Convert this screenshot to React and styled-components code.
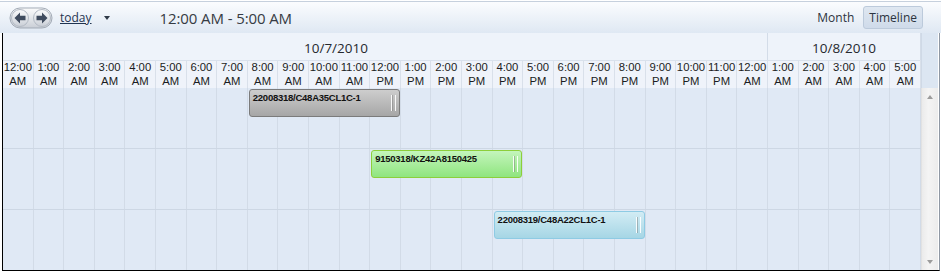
import React from "react";
import styled, { createGlobalStyle } from "styled-components";

const GlobalStyle = createGlobalStyle`
  html, body {
    margin: 0;
    padding: 0;
    background: #ffffff;
  }
  body {
    font-family: "Open Sans", "Noto Sans", sans-serif;
  }
`

const Frame = styled.div`
  width: 941px;
  height: 273px;
  overflow: hidden;
  background: #ffffff;
`

const Toolbar = styled.div`
  height: 32px;
  box-sizing: border-box;
  border-top: 1px solid #c6d0dd;
  margin-top: 1px;
  background: linear-gradient(#fbfcfe 0%, #eef3f9 45%, #dfe8f3 100%);
  display: flex;
  align-items: center;
  padding: 0 18px 0 9px;
`

const NavPair = styled.svg`
  width: 44px;
  height: 22px;
  display: block;
  margin-top: 1px;
`

const TodayLink = styled.a`
  margin-left: 7px;
  font-size: 12px;
  color: #1f3350;
  text-decoration: underline;
  cursor: pointer;
`

const Caret = styled.span`
  margin-left: 12px;
  width: 0;
  height: 0;
  border-left: 3.5px solid transparent;
  border-right: 3.5px solid transparent;
  border-top: 4px solid #2f3a48;
`

const RangeTitle = styled.div`
  margin-left: 50px;
  font-size: 15px;
  color: #363b43;
  letter-spacing: -0.1px;
`

const ViewSwitch = styled.div`
  margin-left: auto;
  display: flex;
  align-items: center;
  gap: 3px;
`

const ViewButton = styled.div`
  height: 23px;
  box-sizing: border-box;
  padding: 0 5px;
  display: flex;
  align-items: center;
  font-size: 12px;
  color: #2c3440;
  border-radius: 3px;
  border: 1px solid ${p => (p.$active ? "#bccadb" : "transparent")};
  background: ${p => (p.$active ? "linear-gradient(#dfe7f1, #cfdbea)" : "transparent")};
`

const Body = styled.div`
  margin-left: 2px;
  width: 936px;
  display: grid;
  grid-template-columns: 918px 17px;
  grid-template-rows: 27px 28px 182px;
  border-left: 1px solid #000000;
  border-right: 1px solid #8f98a4;
  border-bottom: 1px solid #000000;
`

const DateRow = styled.div`
  display: grid;
  grid-template-columns: repeat(30, 1fr);
  background: #eef3fa;
  border-bottom: 1px solid #d9e1ec;
  box-sizing: border-box;
  height: 28px;
`

const DateCell = styled.div`
  grid-column: span ${p => p.$span};
  border-right: 1px solid #d3dce8;
  font-size: 13.5px;
  color: #26292e;
  display: flex;
  align-items: center;
  justify-content: ${p => (p.$offset ? "flex-start" : "center")};
  padding-left: ${p => p.$offset || 0}px;
  padding-top: 2px;
`

const HeaderFill = styled.div`
  grid-row: 1 / span 2;
  grid-column: 2;
  background: #dce6f2;
  border-left: 1px solid #cfd9e6;
`

const TimeRow = styled.div`
  grid-column: 1;
  display: grid;
  grid-template-columns: repeat(30, 1fr);
  background: #eff3fa;
  border-bottom: 1px solid #d3dce8;
  margin-top: 1px;
  height: 27px;
`

const TimeCell = styled.div`
  border-right: 1px solid #d9e0ea;
  display: flex;
  flex-direction: column;
  align-items: center;
  overflow: hidden;
`

const TimeLine = styled.span`
  display: block;
  height: 13.5px;
  font-family: "Liberation Sans", Arial, sans-serif;
  font-size: 11.3px;
  line-height: 13.5px;
  color: #1b1d22;
  white-space: nowrap;
`

const Content = styled.div`
  grid-column: 1;
  display: flex;
  flex-direction: column;
  background: #e0e9f5;
`

const Lane = styled.div`
  height: 60px;
  display: grid;
  grid-template-columns: repeat(30, 1fr);
  border-bottom: ${p => (p.$last ? "none" : "1px solid #cdd7e4")};
`

const GridCell = styled.div`
  grid-row: 1;
  border-right: 1px solid #d2dbe7;
`

const palette = {
  gray: { top: "#cdcdcd", bottom: "#a6a6a6", border: "#7b7b7b" },
  green: { top: "#c4f5bc", bottom: "#8fe57f", border: "#8ccf3a" },
  blue: { top: "#d2ecf4", bottom: "#a6d6e5", border: "#8ecbe4" },
}

const Appointment = styled.div`
  grid-row: 1;
  grid-column: ${p => p.$start + 1} / span ${p => p.$length};
  align-self: start;
  margin: 1px 1px 0 1px;
  height: 28px;
  box-sizing: border-box;
  border-radius: 3px;
  border: 1px solid ${p => palette[p.$tone].border};
  background: linear-gradient(${p => palette[p.$tone].top}, ${p => palette[p.$tone].bottom});
  position: relative;
  z-index: 1;
  padding: 2px 0 0 3px;
  font-family: "Liberation Sans", Arial, sans-serif;
  font-weight: bold;
  font-size: 9.5px;
  letter-spacing: -0.25px;
  color: #111111;
  white-space: nowrap;
`

const Grip = styled.span`
  position: absolute;
  right: 3px;
  top: 5px;
  width: 3px;
  height: 16px;
  border-left: 1px solid rgba(255, 255, 255, 0.9);
  border-right: 1px solid rgba(255, 255, 255, 0.9);
  box-shadow: inset 1px 0 0 rgba(120, 120, 120, 0.45);
`

const ScrollBar = styled.div`
  grid-column: 2;
  background: linear-gradient(90deg, #ebebeb, #f4f4f4 40%, #ececec);
  border-left: 1px solid #e2e2e2;
  display: flex;
  flex-direction: column;
  justify-content: space-between;
  align-items: center;
  padding: 7px 0 6px;
`

const ScrollArrow = styled.span`
  width: 0;
  height: 0;
  border-left: 3.5px solid transparent;
  border-right: 3.5px solid transparent;
  ${p =>
    p.$down
      ? "border-top: 4px solid #9c9c9c;"
      : "border-bottom: 4px solid #9c9c9c;"}
`

const hours = [];
for (let i = 0; i < 30; i++) {
  const h = i % 24;
  const label = (h % 12 === 0 ? 12 : h % 12) + ":00";
  hours.push({ label, ampm: h < 12 ? "AM" : "PM" });
}

const lanes = [
  { id: "22008318/C48A35CL1C-1", start: 8, length: 5, tone: "gray" },
  { id: "9150318/KZ42A8150425", start: 12, length: 5, tone: "green" },
  { id: "22008319/C48A22CL1C-1", start: 16, length: 5, tone: "blue" },
]

const NavButtons = () => (
  <NavPair viewBox="0 0 44 22">
    <defs>
      <linearGradient id="navg" x1="0" y1="0" x2="0" y2="1">
        <stop offset="0" stopColor="#fbfbfc" />
        <stop offset="0.5" stopColor="#e3e6ea" />
        <stop offset="1" stopColor="#c9ced6" />
      </linearGradient>
    </defs>
    <path
      d="M11 1 A10 10 0 0 0 11 21 L33 21 A10 10 0 0 0 33 1 Z"
      fill="url(#navg)"
      stroke="#a3abb6"
    />
    <circle cx="11" cy="11" r="8.5" fill="url(#navg)" stroke="#b3bac4" />
    <circle cx="33" cy="11" r="8.5" fill="url(#navg)" stroke="#b3bac4" />
    <path d="M5.5 11 L11 5.5 L11 8.8 L16.5 8.8 L16.5 13.2 L11 13.2 L11 16.5 Z" fill="#3f4b5e" />
    <path d="M38.5 11 L33 5.5 L33 8.8 L27.5 8.8 L27.5 13.2 L33 13.2 L33 16.5 Z" fill="#3f4b5e" />
  </NavPair>
)

export default function App() {
  return (
    <Frame>
      <GlobalStyle />
      <Toolbar>
        <NavButtons />
        <TodayLink>today</TodayLink>
        <Caret />
        <RangeTitle>12:00 AM - 5:00 AM</RangeTitle>
        <ViewSwitch>
          <ViewButton>Month</ViewButton>
          <ViewButton $active>Timeline</ViewButton>
        </ViewSwitch>
      </Toolbar>
      <Body>
        <DateRow>
          <DateCell $span={25} $offset={301}>10/7/2010</DateCell>
          <DateCell $span={5}>10/8/2010</DateCell>
        </DateRow>
        <HeaderFill />
        <TimeRow>
          {hours.map((h, i) => (
            <TimeCell key={i}>
              <TimeLine>{h.label}</TimeLine>
              <TimeLine>{h.ampm}</TimeLine>
            </TimeCell>
          ))}
        </TimeRow>
        <Content>
          {lanes.map((a, li) => (
            <Lane key={a.id} $last={li === lanes.length - 1}>
              {hours.map((h, i) => (
                <GridCell key={i} style={{ gridColumn: i + 1 }} />
              ))}
              <Appointment $start={a.start} $length={a.length} $tone={a.tone}>
                {a.id}
                <Grip />
              </Appointment>
            </Lane>
          ))}
        </Content>
        <ScrollBar>
          <ScrollArrow />
          <ScrollArrow $down />
        </ScrollBar>
      </Body>
    </Frame>
  )
}
